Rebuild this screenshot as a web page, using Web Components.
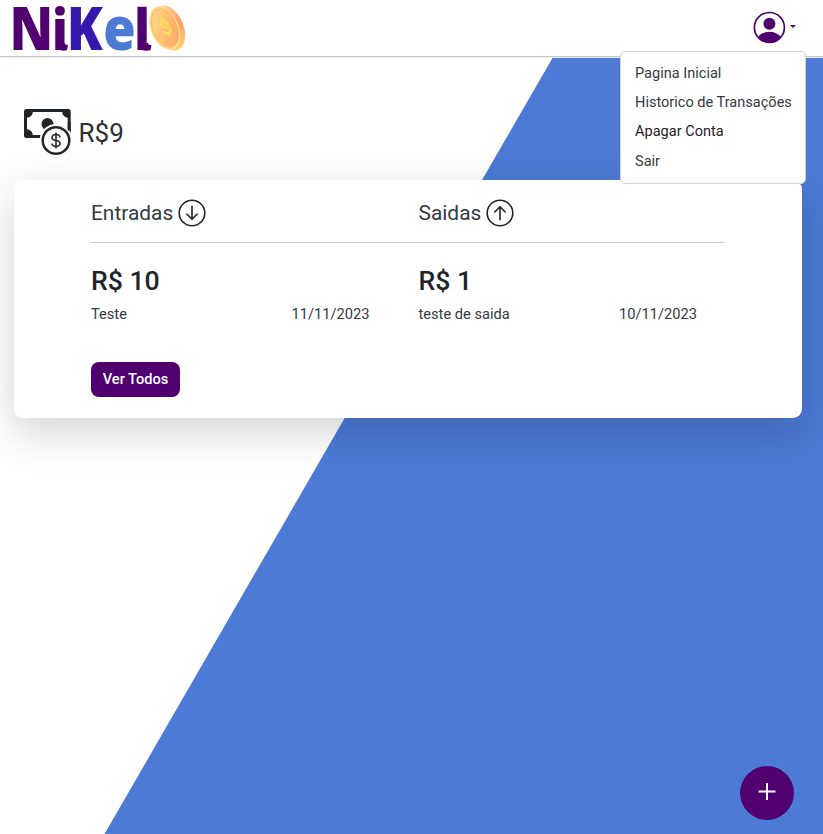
<!DOCTYPE html>
<html lang="pt-BR"><head><meta charset="utf-8"><title>NiKel</title>
<style>html,body{margin:0;height:100%;overflow:hidden;background:#fff;font:400 14.550px/21.6px Roboto,sans-serif;color:#343a40}</style></head>
<body><nikel-app></nikel-app>
<script>
const define=(name,markup)=>customElements.define(name,class extends HTMLElement{
  constructor(){super();this.attachShadow({mode:'open'}).innerHTML=markup;}
});
define('nikel-logo',`<style>:host{display:block;width:190px;height:56px}svg{display:block;overflow:visible}text{font:800 61px "Open Sans",sans-serif}.s{font-size:56.500px}</style>
<svg width="190" height="56" viewBox="0 0 190 56"><defs>
<linearGradient id="face" x1="0" y1="0" x2="1" y2="1"><stop offset="0" stop-color="#ffe397"/><stop offset=".5" stop-color="#ffbe70"/><stop offset="1" stop-color="#ff9e66"/></linearGradient>
<linearGradient id="rim" x1="0" y1="0" x2="0" y2="1"><stop offset="0" stop-color="#ffcf85"/><stop offset=".45" stop-color="#ff9c68"/><stop offset="1" stop-color="#ffd36b"/></linearGradient></defs>
<g transform="scale(.86 1)"><text y="50.3"><tspan x="11.2" fill="#50006f">N</tspan><tspan class="s" x="60.500" fill="#50006f">i</tspan><tspan x="77.6" fill="#3518ae">K</tspan><tspan x="120" fill="#4c7ad5">e</tspan><tspan class="s" x="156.2" fill="#50006f">l</tspan></text></g>
<path d="M61 43h4q0 2 3 2l-1 5.300q-4 1-7-.2zM143 43h5q0 2 3.500 2l-1 5.300q-5 1-9-.3z" fill="#50006f"/>
<ellipse cx="169.300" cy="28" rx="14.300" ry="23.500" transform="rotate(-22 169.300 28)" fill="url(#rim)"/>
<ellipse cx="164.700" cy="28" rx="14" ry="22.700" transform="rotate(-22 164.700 28)" fill="#ffd98a"/>
<ellipse cx="165" cy="28" rx="12" ry="20" transform="rotate(-22 165 28)" fill="url(#face)" stroke="#ffad65" stroke-width=".8"/>
<path d="M168.500 25q-2-4-6-3.500q-3 3 1.500 5.500q7 0 6.500 4.500q-3 3.500-8 0M162 18.500l1.500 3M168.500 33l1.500 3" fill="none" stroke="#ffdb66" stroke-width="2.600"/>
</svg>`);
define('user-menu',`<style>:host{display:block;position:relative;width:43px;height:33px}
button{all:unset;display:flex;align-items:center;gap:3.500px}i{border:3.6px solid transparent;border-top-color:#50006f;border-bottom:0;margin-top:-3px}svg{display:block}
nav{position:absolute;z-index:5;right:-10px;top:40px;width:184px;padding:7px 0 8px;height:115.500px;background:#fff;border:1px solid #d3d3d3;border-radius:5px;display:flex;flex-direction:column}</style>
<button><svg width="33" height="33" viewBox="0 0 33 33"><defs><clipPath id="c"><circle cx="16.400" cy="16.500" r="15"/></clipPath></defs><circle cx="16.400" cy="16.500" r="15" fill="none" stroke="#50006f" stroke-width="1.700"/><circle cx="16.400" cy="12.700" r="6" fill="#50006f"/><ellipse cx="16.400" cy="31" rx="13" ry="10.300" fill="#50006f" clip-path="url(#c)"/></svg><i></i></button>
<nav><slot></slot></nav>`);
define('menu-item',`<style>:host{display:block;padding:3.850px 14px;height:21.600px;white-space:nowrap}:host([active]){color:#1e2125}</style><slot></slot>`);
define('top-bar',`<style>:host{box-sizing:border-box;height:58px;display:flex;justify-content:space-between;border-bottom:1px solid #ececec;box-shadow:inset 0 -1px #c8c8c8}::slotted(user-menu){margin:11px 27px 0 0}</style><nikel-logo></nikel-logo><slot></slot>`);
define('balance-line',`<style>:host{display:flex;align-items:flex-start;height:71px;padding:51px 0 0 24px;gap:7.500px;font-size:26px;line-height:48px;color:#2b3035}svg{display:block}</style>
<svg width="47" height="48" viewBox="0 0 47 48" fill="#212529"><rect x="1.500" y="1.500" width="43.700" height="26" rx="1" fill="none" stroke="#212529" stroke-width="3"/><path d="M2 2h7q0 6-7 7zM45 2h-7q0 6 7 7zM2 27h7q0-6-7-7z"/><circle cx="23.500" cy="15" r="6"/><circle cx="32" cy="31.500" r="16.500" fill="#fff"/><path d="M45.200 13v8.500" stroke="#212529" stroke-width="3"/><circle cx="32" cy="31.500" r="13.300" fill="#fff" stroke="#212529" stroke-width="2.500"/><path d="M36 28.500q-.4-3-4-3t-4 3q0 2.400 4 3t4 3q-.3 3-4 3t-4-3M32 23.500v16" fill="none" stroke="#212529" stroke-width="1.600"/></svg><slot></slot>`);
define('arrow-circle',`<style>:host{display:block;width:28px;height:28px}:host([up]) svg{transform:scaleY(-1)}svg{display:block}</style><svg width="28" height="28" viewBox="0 0 28 28" fill="none" stroke="#212529" stroke-width="1.600"><circle cx="14" cy="14" r="12.800"/><path d="M14 7.300v13M8.800 15l5.200 5.300 5.200-5.300" stroke-linecap="round" stroke-linejoin="round"/></svg>`);
define('column-title',`<style>:host{display:flex;align-items:center;gap:5px;margin-top:-1px;font-size:20.900px;line-height:28px}</style><slot></slot>`);
define('transaction-entry',`<style>:host{display:block}h3{margin:0;font-size:26.600px;line-height:30px;font-weight:500;color:#212529}div{display:flex;justify-content:space-between;width:278.500px;margin-top:8px;font-size:14.650px}</style><h3><slot name="amount"></slot></h3><div><slot></slot><slot name="date"></slot></div>`);
define('action-button',`<style>:host{display:block}button{all:unset;box-sizing:border-box;width:89px;height:34.500px;border-radius:8px;background:#50006f;color:#fff;text-align:center;font:500 14.600px/33px Roboto,sans-serif}</style><button><slot></slot></button>`);
define('summary-card',`<style>:host{display:block;box-sizing:border-box;width:788.200px;height:238.400px;margin:0 0 0 13.500px;padding:20px 77.500px;background:#fff;border-radius:9px;box-shadow:0 14.400px 43.200px rgba(0,0,0,.176)}
.g{display:grid;grid-template-columns:327.500px 1fr}.h{height:42px;border-bottom:1px solid #c8c8c8;align-items:start}.b{padding-top:23px;height:96px}</style><div class="g h"><slot name="head"></slot></div><div class="g b"><slot></slot></div><slot name="foot"></slot>`);
define('add-button',`<style>:host{position:absolute;right:29px;bottom:14.500px;width:54px;height:54px;border-radius:50%;background:#50006f;display:grid;place-items:center}svg{display:block}</style><svg width="54" height="54"><path d="M18.500 25.500h17M27 17v17" stroke="#fff" stroke-width="2"/></svg>`);
define('nikel-app',`<style>:host{display:block;position:relative;height:834px}main{height:776px;position:relative;z-index:0}main:before{content:"";position:absolute;z-index:-1;inset:0;background:#4c7ad5;clip-path:polygon(552.500px 0,100% 0,100% 100%,104.500px 100%)}top-bar{position:relative;z-index:2}</style>
<top-bar><user-menu><menu-item>Pagina Inicial</menu-item><menu-item>Historico de Transações</menu-item><menu-item active>Apagar Conta</menu-item><menu-item>Sair</menu-item></user-menu></top-bar>
<main><balance-line>R$9</balance-line><summary-card>
<column-title slot="head">Entradas <arrow-circle></arrow-circle></column-title><column-title slot="head">Saidas <arrow-circle up></arrow-circle></column-title>
<transaction-entry><span slot="amount">R$ 10</span><span>Teste</span><span slot="date">11/11/2023</span></transaction-entry>
<transaction-entry><span slot="amount">R$ 1</span><span>teste de saida</span><span slot="date">10/11/2023</span></transaction-entry>
<action-button slot="foot">Ver Todos</action-button></summary-card><add-button></add-button></main>`);
</script></body></html>
